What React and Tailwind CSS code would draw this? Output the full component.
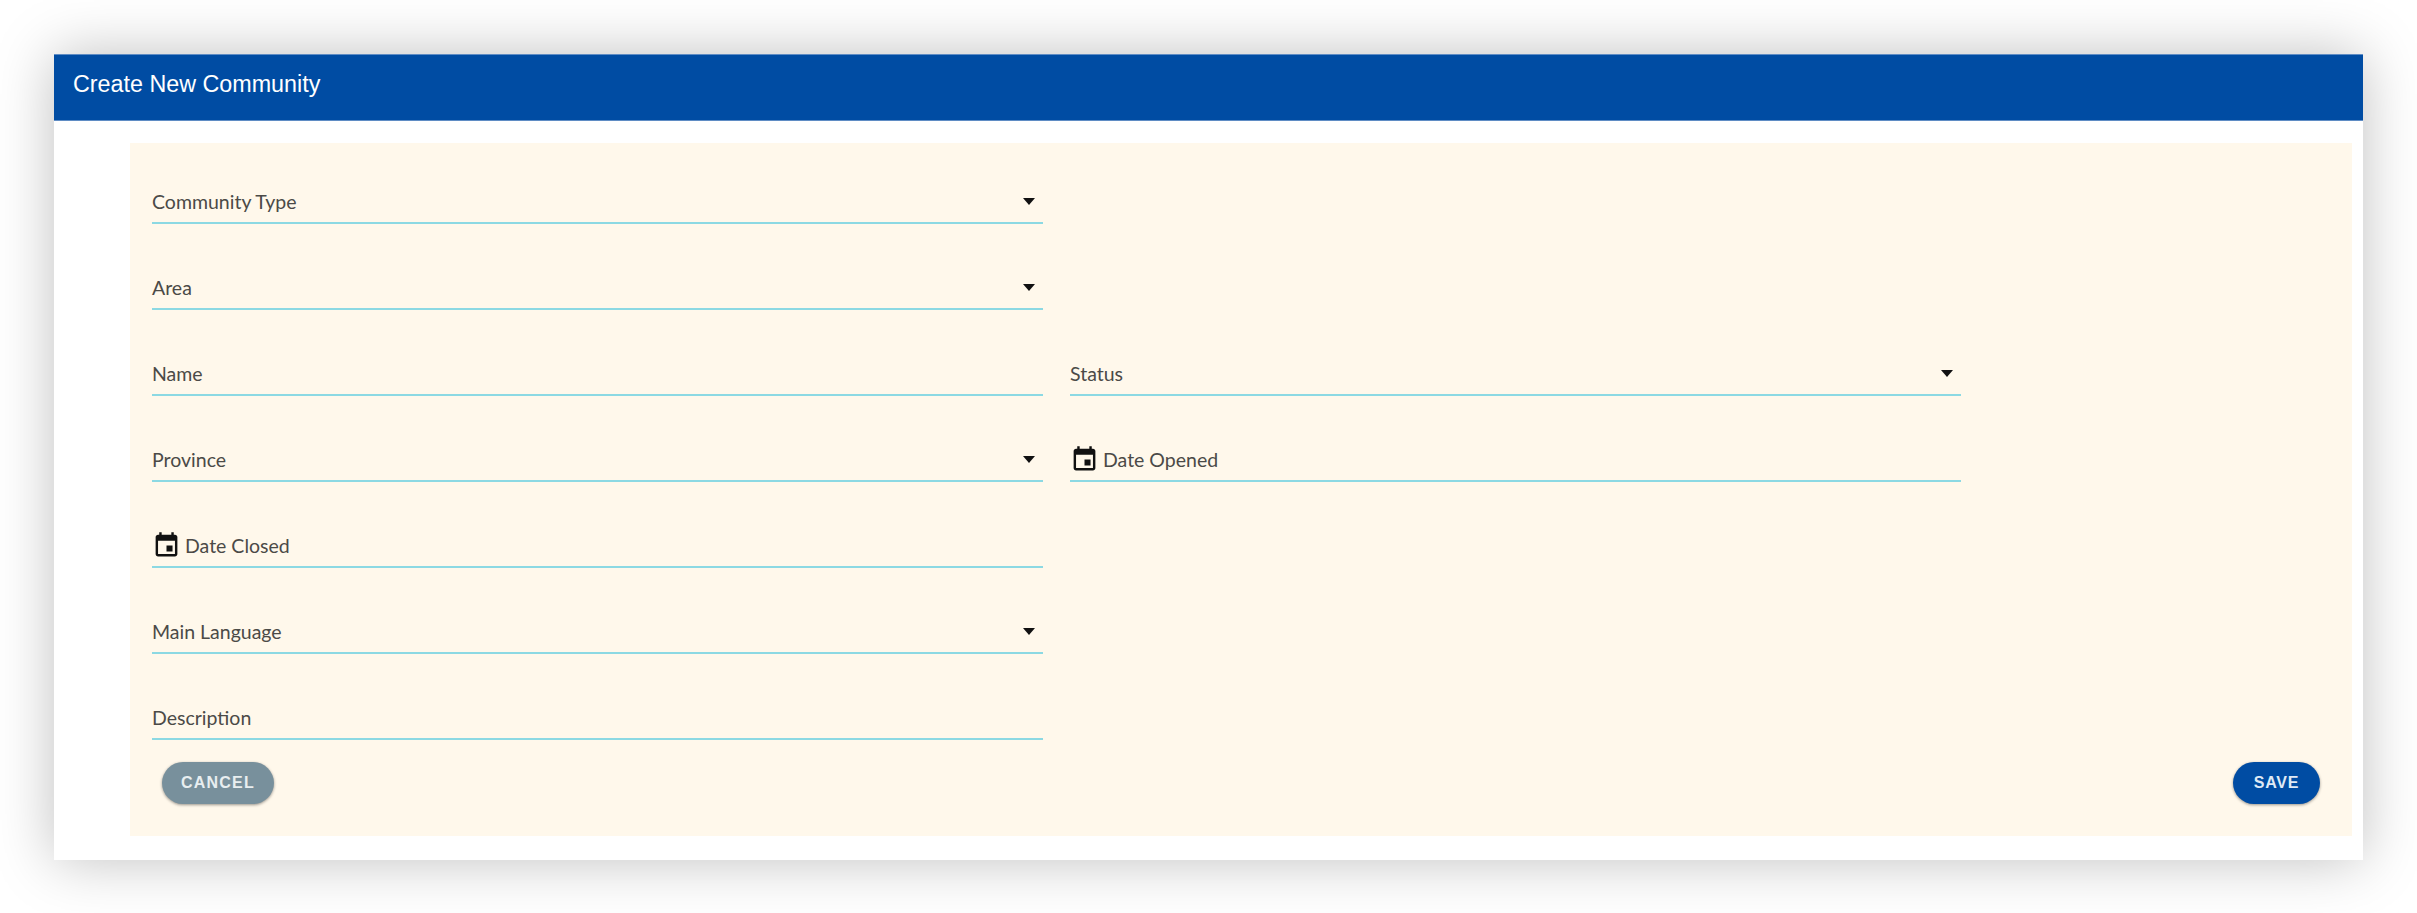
const CalendarIcon = () => (
  <svg viewBox="0 0 24 24" className="w-[29px] h-[29px] shrink-0 fill-[#111]">
    <path d="M17 12h-5v5h5v-5zM16 1v2H8V1H6v2H5c-1.11 0-1.99.9-1.99 2L3 19c0 1.1.89 2 2 2h14c1.1 0 2-.9 2-2V5c0-1.1-.9-2-2-2h-1V1h-2zm3 18H5V8h14v11z" />
  </svg>
);

const Field = ({ label, select, date, className = '' }) => (
  <div className={`h-[42px] flex items-center pb-px border-b-2 border-[#8cd9e3] text-[19.5px] text-[#4b4a47] ${className}`}>
    {date && (
      <span className="mr-[4px]">
        <CalendarIcon />
      </span>
    )}
    <span className="flex-1">{label}</span>
    {select && (
      <span className="mr-[8px] w-0 h-0 border-x-[6px] border-x-transparent border-t-[7px] border-t-[#111]" />
    )}
  </div>
);

export default function App() {
  return (
    <div className="min-h-[913px] bg-white pt-[54px] px-[54px] font-['Lato',sans-serif]">
      <div className="w-[2309px] h-[806px] bg-white shadow-[0_0_55px_rgba(0,0,0,0.25)]">
        {/* Header */}
        <div className="h-[67px] flex items-center px-[19px] pb-[7px] bg-[#004ca3] border-y border-[#5f8cc4]">
          <h1 className="text-[23.3px] text-white font-['Liberation_Sans',sans-serif]">Create New Community</h1>
        </div>

        {/* Form */}
        <div className="ml-[76px] mr-[11px] mt-[22px] h-[693px] bg-[#fff8eb] pt-[39px] px-[22px]">
          <div className="grid grid-cols-[891px_891px] gap-x-[27px] gap-y-[44px]">
            <Field label="Community Type" select className="col-start-1" />
            <Field label="Area" select className="col-start-1" />
            <Field label="Name" className="col-start-1" />
            <Field label="Status" select />
            <Field label="Province" select className="col-start-1" />
            <Field label="Date Opened" date />
            <Field label="Date Closed" date className="col-start-1" />
            <Field label="Main Language" select className="col-start-1" />
            <Field label="Description" className="col-start-1" />
          </div>

          <div className="flex justify-between mt-[22px] ml-[10px] mr-[10px]">
            <button className="h-[42px] w-[112px] rounded-full bg-[#78909c] text-[#e8eef0] text-[16px] font-bold tracking-[1.2px] shadow-[0_1px_3px_rgba(0,0,0,0.4)] font-['Liberation_Sans',sans-serif]">
              CANCEL
            </button>
            <button className="h-[42px] w-[87px] rounded-full bg-[#004ca3] text-[#dfe9f5] text-[16px] font-bold tracking-[0.8px] shadow-[0_1px_3px_rgba(0,0,0,0.4)] font-['Liberation_Sans',sans-serif]">
              SAVE
            </button>
          </div>
        </div>
      </div>
    </div>
  );
}
